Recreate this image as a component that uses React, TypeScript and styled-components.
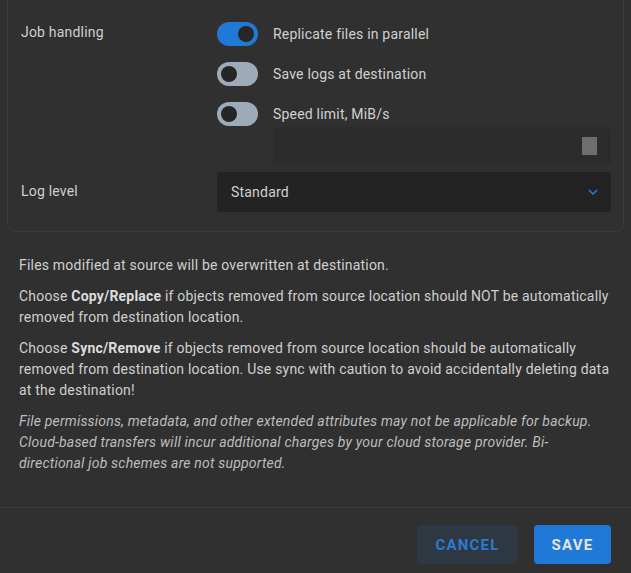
import styled, { createGlobalStyle } from "styled-components";

const Global = createGlobalStyle`
  body { margin: 0; background: #303030; font-family: Roboto, "Liberation Sans", sans-serif; letter-spacing: 0.2px; }
  * { box-sizing: border-box; }
`;

const Page = styled.div`
  width: 631px;
  height: 573px;
  display: flex;
  flex-direction: column;
  overflow: hidden;
`;

const Card = styled.div`
  margin: -20px 7px 0 7px;
  padding: 41px 12px 19px 12px;
  border: 1px solid #3c3c3c;
  border-radius: 8px;
  display: grid;
  grid-template-columns: 197px 1fr;
  row-gap: 8px;
`;

const Label = styled.div`
  color: #cfcfcf;
  font-size: 14px;
  padding-left: 1px;
  padding-top: ${(p: { top: number }) => p.top}px;
`;

const Options = styled.div`
  display: flex;
  flex-direction: column;
  gap: 16px;
`;

const OptionRow = styled.div`
  display: flex;
  align-items: center;
  gap: 15px;
  height: 24px;
  color: #d0d0d0;
  font-size: 14px;
`;

const Toggle = styled.div<{ on?: boolean }>`
  width: 41px;
  height: 24px;
  border-radius: 12px;
  background: ${(p) => (p.on ? "#2079d6" : "#9eabb8")};
  position: relative;
  flex-shrink: 0;
  &::after {
    content: "";
    position: absolute;
    top: 4px;
    left: ${(p) => (p.on ? "21px" : "4px")};
    width: 16px;
    height: 16px;
    border-radius: 50%;
    background: #262626;
  }
`;

const SpeedBlock = styled.div`
  display: flex;
  flex-direction: column;
  gap: 1px;
`;

const SpeedInput = styled.div`
  margin-left: 56px;
  height: 37px;
  background: #2c2c2c;
  border-radius: 4px;
  display: flex;
  align-items: center;
  justify-content: flex-end;
  padding-right: 14px;
  &::after {
    content: "";
    width: 15px;
    height: 18px;
    background: #6e6e6e;
  }
`;

const Select = styled.div`
  height: 40px;
  background: #232323;
  border-radius: 4px;
  display: flex;
  align-items: center;
  justify-content: space-between;
  padding: 0 12px 0 14px;
  color: #d0d0d0;
  font-size: 14px;
`;

const Notes = styled.div`
  padding: 23px 19px 0 19px;
  display: flex;
  flex-direction: column;
  gap: 10px;
  color: #cfcfcf;
  font-size: 14px;
  line-height: 21px;
  flex: 1;
  p { margin: 0; }
  b { font-weight: 700; color: #dcdcdc; }
`;

const Italic = styled.p`
  font-style: italic;
  color: #bdbdbd;
`;

const Footer = styled.div`
  border-top: 1px solid #3c3c3c;
  height: 66px;
  display: flex;
  justify-content: flex-end;
  align-items: flex-start;
  gap: 16px;
  padding: 17px 20px 0 0;
`;

const Button = styled.button<{ primary?: boolean }>`
  height: 39px;
  border: none;
  border-radius: 4px;
  padding: 0 16px;
  font-family: Roboto, "Liberation Sans", sans-serif;
  font-weight: 700;
  font-size: 15px;
  letter-spacing: 1.2px;
  background: ${(p) => (p.primary ? "#2079d6" : "#2e3842")};
  color: ${(p) => (p.primary ? "#e4e4e4" : "#2a7bd0")};
  min-width: ${(p) => (p.primary ? "77px" : "101px")};
`;

export default function App() {
  return (
    <Page>
      <Global />
      <Card>
        <Label top={2}>Job handling</Label>
        <Options>
          <OptionRow>
            <Toggle on />
            Replicate files in parallel
          </OptionRow>
          <OptionRow>
            <Toggle />
            Save logs at destination
          </OptionRow>
          <SpeedBlock>
            <OptionRow>
              <Toggle />
              Speed limit, MiB/s
            </OptionRow>
            <SpeedInput />
          </SpeedBlock>
        </Options>
        <Label top={11}>Log level</Label>
        <Select>
          Standard
          <svg width="12" height="12" viewBox="0 0 24 24" fill="none" stroke="#2079d6" strokeWidth="3.5" strokeLinecap="round" strokeLinejoin="round">
            <path d="M5 9l7 7 7-7" />
          </svg>
        </Select>
      </Card>
      <Notes>
        <p>Files modified at source will be overwritten at destination.</p>
        <p>
          Choose <b>Copy/Replace</b> if objects removed from source location should NOT be automatically removed from destination location.
        </p>
        <p>
          Choose <b>Sync/Remove</b> if objects removed from source location should be automatically removed from destination location. Use sync with caution to avoid accidentally deleting data at the destination!
        </p>
        <Italic>
          File permissions, metadata, and other extended attributes may not be applicable for backup. Cloud-based transfers will incur additional charges by your cloud storage provider. Bi-directional job schemes are not supported.
        </Italic>
      </Notes>
      <Footer>
        <Button>CANCEL</Button>
        <Button primary>SAVE</Button>
      </Footer>
    </Page>
  );
}
